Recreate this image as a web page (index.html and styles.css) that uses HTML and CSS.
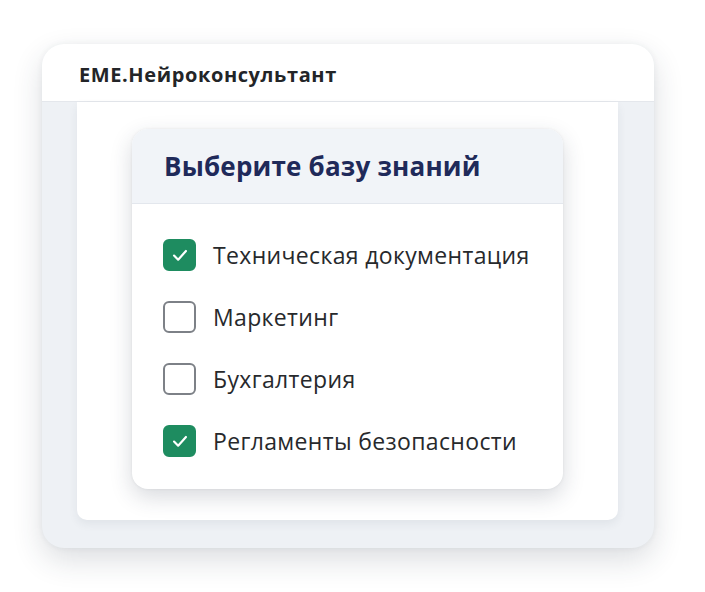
FILE: index.html
```html
<!DOCTYPE html>
<html lang="ru">
<head>
<meta charset="utf-8">
<link rel="stylesheet" href="styles.css">
</head>
<body>
<div class="window">
  <div class="window-header">ЕМЕ.Нейроконсультант</div>
  <div class="window-body">
    <div class="panel">
      <div class="dialog">
        <div class="dialog-header">Выберите базу знаний</div>
        <ul class="options">
          <li class="option"><span class="box checked"><svg viewBox="0 0 24 24"><path d="M6.5 12.5l3.8 3.8 7.2-8"/></svg></span>Техническая документация</li>
          <li class="option"><span class="box"></span>Маркетинг</li>
          <li class="option"><span class="box"></span>Бухгалтерия</li>
          <li class="option"><span class="box checked"><svg viewBox="0 0 24 24"><path d="M6.5 12.5l3.8 3.8 7.2-8"/></svg></span>Регламенты безопасности</li>
        </ul>
      </div>
    </div>
  </div>
</div>
</body>
</html>
```
FILE: styles.css
```css
html, body {
  margin: 0;
  padding: 0;
  background: #ffffff;
  font-family: "Open Sans", "Noto Sans", sans-serif;
}
body {
  width: 705px;
  height: 592px;
  overflow: hidden;
  padding-top: 44px;
  padding-left: 42px;
  box-sizing: border-box;
}
.window {
  width: 612px;
  height: 504px;
  border-radius: 22px;
  background: #eef1f5;
  box-shadow: 0 12px 30px rgba(40, 50, 70, 0.16), 0 0 6px rgba(40, 50, 70, 0.06);
  overflow: hidden;
  display: flex;
  flex-direction: column;
}
.window-header {
  height: 58px;
  flex: none;
  background: #ffffff;
  border-bottom: 1px solid #e4e7ec;
  padding-left: 37px;
  display: flex;
  align-items: center;
  font-size: 20px;
  font-weight: 700;
  color: #232528;
  letter-spacing: 0.6px;
  padding-top: 3px;
  box-sizing: border-box;
}
.window-body {
  flex: 1;
  padding: 0 36px 28px 35px;
  display: flex;
}
.panel {
  flex: 1;
  background: #ffffff;
  border-radius: 0 0 10px 10px;
  box-shadow: 0 4px 10px rgba(40, 50, 70, 0.07);
  padding: 27px 0 0 55px;
}
.dialog {
  width: 431px;
  height: 360px;
  border-radius: 16px;
  background: #ffffff;
  box-shadow: 0 8px 22px rgba(40, 50, 70, 0.18), 0 0 3px rgba(40, 50, 70, 0.08);
  overflow: hidden;
}
.dialog-header {
  height: 75px;
  background: #f1f4f8;
  border-bottom: 1px solid #e3e7ed;
  box-sizing: border-box;
  display: flex;
  align-items: center;
  padding-left: 32px;
  font-size: 26px;
  font-weight: 700;
  color: #1f2a5a;
  letter-spacing: 0.2px;
}
.options {
  list-style: none;
  margin: 0;
  padding: 20px 0 0 31px;
}
.option {
  height: 62px;
  display: flex;
  align-items: center;
  font-size: 23px;
  color: #27292c;
  letter-spacing: 0.35px;
}
.box {
  width: 33px;
  height: 32px;
  box-sizing: border-box;
  border: 2px solid #7d8187;
  border-radius: 6px;
  margin-right: 17px;
  flex: none;
  display: flex;
  align-items: center;
  justify-content: center;
}
.box.checked {
  background: #1e8c60;
  border-color: #1e8c60;
}
.box svg {
  width: 26px;
  height: 26px;
  fill: none;
  stroke: #ffffff;
  stroke-width: 2;
  stroke-linecap: round;
  stroke-linejoin: round;
}
```
